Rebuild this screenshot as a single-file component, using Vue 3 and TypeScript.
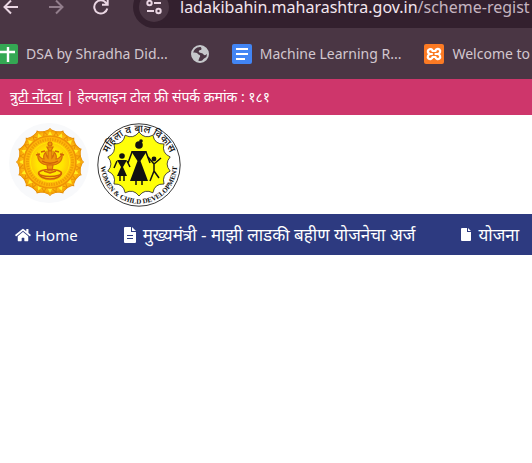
<script setup lang="ts">
interface Bookmark {
  label: string
  icon: 'sheet' | 'globe' | 'doc' | 'xampp'
}

interface NavItem {
  label: string
  icon: 'home' | 'form' | 'page'
}

const bookmarks: Bookmark[] = [
  { label: 'DSA by Shradha Did...', icon: 'sheet' },
  { label: '', icon: 'globe' },
  { label: 'Machine Learning R...', icon: 'doc' },
  { label: 'Welcome to', icon: 'xampp' },
]

const navItems: NavItem[] = [
  { label: 'Home', icon: 'home' },
  { label: 'मुख्यमंत्री - माझी लाडकी बहीण योजनेचा अर्ज', icon: 'form' },
  { label: 'योजना', icon: 'page' },
]

// Angles of the sixteen petals round the state seal
const petals = Array.from({ length: 16 }, (_, i) => i * 22.5)

// Scalloped outline: cusps on the outer radius joined by inward curves
function sunburst(cx: number, cy: number, count: number, outer: number, inner: number): string {
  const at = (r: number, k: number) => {
    const a = (k / count) * Math.PI * 2 - Math.PI / 2
    return `${(cx + r * Math.cos(a)).toFixed(1)} ${(cy + r * Math.sin(a)).toFixed(1)}`
  }
  let d = `M${at(outer, 0)}`
  for (let k = 0; k < count; k++) d += `Q${at(inner, k + 0.5)} ${at(outer, k + 1)}`
  return d + 'Z'
}

const burst = sunburst(42, 41, 14, 32, 25)
</script>

<template>
  <div class="screen">
    <header class="browser">
      <div class="toolbar">
        <button class="tool" aria-label="Back">
          <svg width="16" height="16" viewBox="0 0 16 16"><path d="M15 8H2M8 1.500L1.500 8L8 14.500" /></svg>
        </button>
        <button class="tool faded" aria-label="Forward">
          <svg width="16" height="16" viewBox="0 0 16 16"><path d="M1 8H14M8 1.500L14.500 8L8 14.500" /></svg>
        </button>
        <button class="tool" aria-label="Reload">
          <svg width="16" height="16" viewBox="0 0 16 16"><path d="M14.300 9.500A6.600 6.600 0 1 1 13 3.800L14.500 5.500M14.700 0V5.800H9" /></svg>
        </button>
        <div class="omnibox">
          <button class="site-info" aria-label="Site information">
            <svg width="16" height="16" viewBox="0 0 16 16">
              <circle cx="3.500" cy="4" r="2.200" /><path d="M8 4h7M1 12h7" /><circle cx="12.500" cy="12" r="2.200" />
            </svg>
          </button>
          <span class="url"><span class="host">ladakibahin.maharashtra.gov.in</span>/scheme-regist</span>
        </div>
      </div>

      <nav class="bookmarks" aria-label="Bookmarks">
        <a v-for="b in bookmarks" :key="b.icon" href="#" class="bookmark" :class="b.icon" :aria-label="b.label || 'Bookmark'">
          <svg v-if="b.icon === 'sheet'" width="20" height="20" viewBox="0 0 20 20">
            <rect width="20" height="20" rx="2" fill="#34a853" /><path d="M10 3V18M2 8H17" stroke="#fff" stroke-width="2.400" />
          </svg>
          <svg v-else-if="b.icon === 'globe'" width="18" height="18" viewBox="0 0 18 18">
            <circle cx="9" cy="9" r="8" fill="#4a3644" stroke="#c6c8cb" stroke-width="2" />
            <path d="M1.500 8C4 7 6.500 8 7.500 9.500C9.500 10 9.500 11.500 8.500 12.500C8 14 7.500 15 7 17C3 16 1 12 1.500 8ZM9 1C13 1 16 4 17 8C15 10 14 11 12.500 9.500C12 8 10.500 8.500 8.500 7.500C7 6.500 8 5 10 5C11 4 10.500 2.500 9 1ZM11 16.500C11.500 14 13.500 13 16 12C15 14.500 13 16.500 11 16.500Z" fill="#c6c8cb" />
          </svg>
          <svg v-else-if="b.icon === 'doc'" width="20" height="20" viewBox="0 0 20 20">
            <rect width="20" height="20" rx="2" fill="#4285f4" /><path d="M4 5H16M4 10H16M4 15H13" stroke="#fff" stroke-width="2.200" />
          </svg>
          <svg v-else width="20" height="20" viewBox="0 0 20 20">
            <rect width="20" height="20" rx="2" fill="#fb7a24" />
            <g fill="none" stroke="#fff" stroke-width="2.200" stroke-linecap="round" stroke-linejoin="round">
              <path d="M4.500 6C6 4.500 8.500 5 8.500 7H11.500C11.500 5 14 4.500 15.500 5.500C17 7 16 9.500 14 10C16 10.500 17 13 15.500 14.500C14 15.500 11.500 15 11.500 13H8.500C8.500 15 6 15.500 4.500 14.500C3 13 4 10.500 6 10H8" />
              <path d="M4 6.500C3.500 8.500 4.500 9.500 6 10M11.500 10H14" />
            </g>
          </svg>
          <span v-if="b.label">{{ b.label }}</span>
        </a>
      </nav>
    </header>

    <div class="helpline">
      <a href="#">त्रुटी नोंदवा</a> | हेल्पलाइन टोल फ्री संपर्क क्रमांक : १८१
    </div>

    <div class="logos">
      <svg width="82" height="86" viewBox="0 0 82 86" role="img" aria-label="Government of Maharashtra">
        <defs>
          <radialGradient id="seal">
            <stop offset="0" stop-color="#fff200" /><stop offset="0.500" stop-color="#ffe600" />
            <stop offset="0.750" stop-color="#ffc808" /><stop offset="1" stop-color="#ffae0a" />
          </radialGradient>
        </defs>
        <circle cx="41" cy="41" r="40" fill="#f8f9fb" />
        <g v-for="a in petals" :key="a" :transform="`rotate(${a} 42 40)`">
          <path d="M34.500 11C36 8.500 40 9.500 42 6.500C44 9.500 48 8.500 49.500 11Z" fill="#fbae08" stroke="#e58c05" />
        </g>
        <circle cx="42" cy="40" r="30.500" fill="#fdb40c" stroke="#f5a305" />
        <g v-for="a in petals" :key="`leaf${a}`" :transform="`rotate(${a} 42 40)`">
          <path d="M39.500 14L42 9L44.500 14Z" fill="#ffee20" />
          <path d="M46 14L48 10L50 14" fill="none" stroke="#e88d05" />
        </g>
        <circle cx="42" cy="40" r="26" fill="url(#seal)" stroke="#ee9306" stroke-width="1.500" />
        <circle cx="42" cy="40" r="22.500" fill="none" stroke="#e88a05" stroke-width="3" stroke-dasharray="1.500 1" opacity="0.650" />
        <circle cx="42" cy="40" r="19.500" fill="none" stroke="#ffe800" />
        <g fill="#ef960a" stroke="#d66c0a" stroke-width="1.200">
          <circle cx="42" cy="22" r="2" />
          <path d="M39 25H45L43 29H41Z" />
          <path d="M30 32C29 39 34 43 40 43H44C50 43 55 39 54 32C52 36 50 37 48 37C49 34 48 32 46 30C46 33 45 35 44 36V29H40V36C39 35 38 33 38 30C36 32 35 34 36 37C34 37 32 36 30 32Z" />
          <path d="M39 43H45L44 49H40Z" />
        </g>
        <g fill="none" stroke="#cf6109" stroke-width="1.400">
          <path d="M28 33L32 32M33 30L37 29M47 29L51 30M52 32L56 33M34 39C38 42 46 42 50 39" />
          <ellipse cx="42" cy="51" rx="11.500" ry="3.500" /><path d="M30.500 51C32 59 52 59 53.500 51M36 49L42 51L48 49" />
        </g>
      </svg>

      <svg width="84" height="84" viewBox="0 0 84 84" role="img" aria-label="Women and Child Development">
        <defs>
          <path id="arc-top" d="M9 42A33 33 0 0 1 75 42" />
          <path id="arc-bottom" d="M5 34A38 38 0 1 0 79 34" />
        </defs>
        <circle cx="42" cy="42" r="41.200" fill="#fff" stroke="#222" stroke-width="0.900" />
        <path :d="burst" fill="#ffff0a" stroke="#222" stroke-width="0.800" />
        <text class="ring-hi"><textPath href="#arc-top" startOffset="50%" text-anchor="middle">महिला व बाल विकास</textPath></text>
        <text class="ring-en"><textPath href="#arc-bottom" startOffset="50%" text-anchor="middle">WOMEN &amp; CHILD DEVELOPMENT</textPath></text>
        <g fill="#111">
          <circle cx="42" cy="22" r="3.800" /><circle cx="44" cy="18" r="1.800" />
          <path d="M34 28H50L43.500 38L51 58H33L40.500 38Z" />
          <circle cx="25" cy="33" r="2.800" /><path d="M20 37H30L26 44L30 53H20L24 44Z" />
          <circle cx="57" cy="36" r="2.400" />
        </g>
        <g fill="none" stroke="#111" stroke-width="1.500">
          <path d="M35 29L31 40M49 29L53 40M20 38L17 45M30 38L33 44M23 52V58M27 52V58M39 58V62M45 58V62" />
          <path d="M51 34L57 41L64 35M57 40V48L53 58M57 48L62 55" />
        </g>
      </svg>
    </div>

    <nav class="main-nav" aria-label="Main">
      <a v-for="n in navItems" :key="n.icon" href="#" :class="n.icon">
        <svg v-if="n.icon === 'home'" width="16" height="14" viewBox="0 0 576 512" fill="currentColor">
          <path d="M280 148L96 300V464a16 16 0 0 0 16 16H224a16 16 0 0 0 16-16V368a16 16 0 0 1 16-16h64a16 16 0 0 1 16 16v96a16 16 0 0 0 16 16H464a16 16 0 0 0 16-16V300L296 148a12 12 0 0 0-16 0zM571 251L488 183V44a12 12 0 0 0-12-12h-56a12 12 0 0 0-12 12v73L318 43a48 48 0 0 0-61 0L4 251a12 12 0 0 0-1 17l25 31a12 12 0 0 0 17 2L280 107a12 12 0 0 1 16 0L531 301a12 12 0 0 0 17-2l25-31a12 12 0 0 0-2-17z" />
        </svg>
        <svg v-else-if="n.icon === 'form'" width="12" height="16" viewBox="0 0 12 16">
          <path d="M1 0H7V5H12V15Q12 16 11 16H1Q0 16 0 15V1Q0 0 1 0ZM8 0L12 4H8Z" fill="#fff" />
          <path d="M3 8.500H9M3 11.500H9" stroke="#2d3a80" />
        </svg>
        <svg v-else width="10" height="13" viewBox="0 0 10 13">
          <path d="M1 0H6V4H10V12Q10 13 9 13H1Q0 13 0 12V1Q0 0 1 0ZM7 0L10 3H7Z" fill="#fff" />
        </svg>
        <span>{{ n.label }}</span>
      </a>
    </nav>
  </div>
</template>

<style>
body {
  background: #fff;
  overflow: hidden;
}
</style>

<style scoped>
.screen {
  overflow: hidden;
  color: #fff;
  font-family: "Noto Sans", "Open Sans", sans-serif;
  white-space: nowrap;
}

a {
  color: inherit;
}

button {
  border: 0;
  padding: 0;
  background: none;
}

svg {
  display: block;
  flex: none;
}

.browser {
  background: #4a3644;
}

.toolbar {
  display: flex;
  align-items: flex-end;
  height: 28px;
  overflow: hidden;
}

.tool {
  display: grid;
  place-items: center start;
  flex: none;
  width: 45px;
  height: 42px;
  padding-left: 3px;
}

.tool svg,
.site-info svg {
  fill: none;
  stroke: #ead6e3;
  stroke-width: 2;
}

.tool.faded {
  opacity: 0.45;
}

.omnibox {
  display: flex;
  align-items: center;
  flex: 1;
  gap: 11px;
  min-width: 0;
  height: 42px;
  margin-left: -2px;
  padding-left: 6px;
  border-radius: 21px 0 0 21px;
  background: #33202e;
}

.site-info {
  display: grid;
  place-items: center;
  flex: none;
  width: 30px;
  height: 30px;
  border-radius: 50%;
  background: #4a3644;
}

.url {
  color: #c5b5c0;
  font-size: 16px;
}

.host {
  color: #f3e6ef;
}

.bookmarks {
  display: flex;
  align-items: center;
  height: 51px;
  gap: 23px;
}

.bookmark {
  display: flex;
  align-items: center;
  flex: none;
  gap: 8px;
  color: #d2c7cf;
  font-size: 14px;
  text-decoration: none;
}

.bookmark.sheet {
  margin-left: -2px;
}

.helpline {
  padding: 0 10px;
  background: #ce366b;
  font-size: 14px;
  line-height: 36px;
}

.logos {
  display: flex;
  align-items: center;
  gap: 7px;
  height: 99px;
  padding-left: 8px;
}

.ring-hi {
  fill: #111;
  font-size: 10px;
  font-weight: 500;
}

.ring-en {
  fill: #111;
  font-family: "Liberation Serif", serif;
  font-size: 7px;
  font-weight: 700;
}

.main-nav {
  display: flex;
  align-items: center;
  gap: 46px;
  height: 41px;
  padding-left: 15px;
  background: #2d3a80;
}

.main-nav a {
  display: flex;
  align-items: center;
  flex: none;
  gap: 7px;
  font-size: 17px;
  text-decoration: none;
}

.main-nav .home {
  gap: 4px;
  font-size: 15px;
}
</style>
